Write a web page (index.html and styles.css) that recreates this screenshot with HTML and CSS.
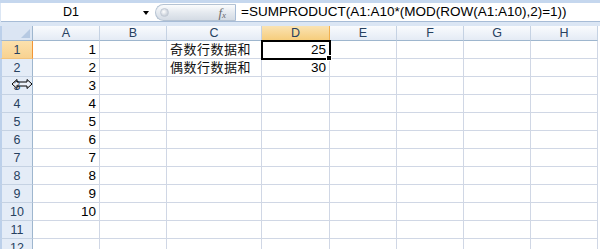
FILE: index.html
```html
<!DOCTYPE html>
<html>
<head>
<meta charset="utf-8" />
<title>SUMPRODUCT</title>
<link rel="stylesheet" href="styles.css">
</head>
<body>
  <section class="sheet">
    <div class="formula-bar">
      <div class="name-box">D1<span class="drop"></span></div>
      <div class="fx-pill"><span class="dot"></span><span class="fx">f<sub>x</sub></span></div>
      <div class="formula">=SUMPRODUCT(A1:A10*(MOD(ROW(A1:A10),2)=1))</div>
    </div>
    <div class="grid">
      <div class="corner"></div>
      <div class="col-hd">A</div>
      <div class="col-hd">B</div>
      <div class="col-hd">C</div>
      <div class="col-hd active">D</div>
      <div class="col-hd">E</div>
      <div class="col-hd">F</div>
      <div class="col-hd">G</div>
      <div class="col-hd">H</div>

      <div class="row-hd active">1</div>
      <div class="cell num">1</div><div class="cell"></div><div class="cell text">奇数行数据和</div><div class="cell num selected">25</div><div class="cell"></div><div class="cell"></div><div class="cell"></div><div class="cell"></div>

      <div class="row-hd">2</div>
      <div class="cell num">2</div><div class="cell"></div><div class="cell text">偶数行数据和</div><div class="cell num">30</div><div class="cell"></div><div class="cell"></div><div class="cell"></div><div class="cell"></div>

      <div class="row-hd">3
        <svg class="resize-cursor" width="22" height="12" viewBox="0 0 22 12">
          <path d="M1 6 L6 1.5 L6 4 L16 4 L16 1.5 L21 6 L16 10.5 L16 8 L6 8 L6 10.5 Z" fill="rgba(255,255,255,0.35)" stroke="#000" stroke-width="1" stroke-linejoin="round"/>
        </svg>
      </div>
      <div class="cell num">3</div><div class="cell"></div><div class="cell"></div><div class="cell"></div><div class="cell"></div><div class="cell"></div><div class="cell"></div><div class="cell"></div>

      <div class="row-hd">4</div>
      <div class="cell num">4</div><div class="cell"></div><div class="cell"></div><div class="cell"></div><div class="cell"></div><div class="cell"></div><div class="cell"></div><div class="cell"></div>

      <div class="row-hd">5</div>
      <div class="cell num">5</div><div class="cell"></div><div class="cell"></div><div class="cell"></div><div class="cell"></div><div class="cell"></div><div class="cell"></div><div class="cell"></div>

      <div class="row-hd">6</div>
      <div class="cell num">6</div><div class="cell"></div><div class="cell"></div><div class="cell"></div><div class="cell"></div><div class="cell"></div><div class="cell"></div><div class="cell"></div>

      <div class="row-hd">7</div>
      <div class="cell num">7</div><div class="cell"></div><div class="cell"></div><div class="cell"></div><div class="cell"></div><div class="cell"></div><div class="cell"></div><div class="cell"></div>

      <div class="row-hd">8</div>
      <div class="cell num">8</div><div class="cell"></div><div class="cell"></div><div class="cell"></div><div class="cell"></div><div class="cell"></div><div class="cell"></div><div class="cell"></div>

      <div class="row-hd">9</div>
      <div class="cell num">9</div><div class="cell"></div><div class="cell"></div><div class="cell"></div><div class="cell"></div><div class="cell"></div><div class="cell"></div><div class="cell"></div>

      <div class="row-hd">10</div>
      <div class="cell num">10</div><div class="cell"></div><div class="cell"></div><div class="cell"></div><div class="cell"></div><div class="cell"></div><div class="cell"></div><div class="cell"></div>

      <div class="row-hd">11</div>
      <div class="cell"></div><div class="cell"></div><div class="cell"></div><div class="cell"></div><div class="cell"></div><div class="cell"></div><div class="cell"></div><div class="cell"></div>

      <div class="row-hd">12</div>
      <div class="cell"></div><div class="cell"></div><div class="cell"></div><div class="cell"></div><div class="cell"></div><div class="cell"></div><div class="cell"></div><div class="cell"></div>
    </div>
  </section>
</body>
</html>
```

FILE: styles.css
```css
html, body {
  width: 100%;
  height: 100%;
}
body {
  margin: 0;
  overflow: hidden;
  background: #dbe6f4;
  font-family: "Liberation Sans", Arial, "Noto Sans CJK SC", sans-serif;
  color: #000;
}
.sheet {
  width: 600px;
  height: 249px;
  overflow: hidden;
  border-top: 3px solid #c5d7ee;
  box-sizing: border-box;
}
.formula-bar {
  display: flex;
  height: 19px;
  margin-left: 1px;
  background: #fff;
  border-bottom: 1px solid #a7bcd6;
  box-sizing: border-box;
}
.name-box {
  position: relative;
  width: 154px;
  padding-right: 14px;
  box-sizing: border-box;
  text-align: center;
  font-size: 12.5px;
  line-height: 18px;
}
.name-box .drop {
  position: absolute;
  left: 142px;
  top: 8px;
  border-left: 3.5px solid transparent;
  border-right: 3.5px solid transparent;
  border-top: 4px solid #000;
}
.fx-pill {
  position: relative;
  width: 81px;
  height: 17px;
  margin-top: 1px;
  border-radius: 9px 0 0 9px;
  background: linear-gradient(#fbfcfd, #e3e8ee 55%, #d4dbe4);
  border: 1px solid #b5c3d3;
  border-right: 1px solid #a7bcd6;
  box-sizing: border-box;
}
.fx-pill .dot {
  position: absolute;
  left: 4px;
  top: 3px;
  width: 9px;
  height: 9px;
  border-radius: 50%;
  background: radial-gradient(circle at 40% 40%, #fff, #c7ced8 70%);
  border: 1px solid #c2cad5;
  box-sizing: border-box;
}
.fx-pill .fx {
  position: absolute;
  right: 9px;
  top: 0;
  font-family: "Liberation Serif", "Times New Roman", serif;
  font-style: italic;
  font-size: 13px;
  line-height: 15px;
  color: #6b6b6b;
}
.fx-pill .fx sub {
  font-size: 9px;
  vertical-align: -1px;
}
.formula {
  flex: 1;
  padding-left: 5px;
  font-size: 13.5px;
  line-height: 18px;
  white-space: nowrap;
}
.grid {
  display: grid;
  grid-template-columns: 33px 67px 67px 95px 68px 67px 67px 67px 67px;
  grid-template-rows: 15px;
  grid-auto-rows: 18px;
  margin-top: 4px;
  background: #fff;
}
.corner {
  position: relative;
  background: #dbe5f3;
  border-left: 2px solid #bcd0ea;
  border-right: 1px solid #9eb6ce;
  border-bottom: 1px solid #9eb6ce;
  box-sizing: border-box;
}
.corner::after {
  content: "";
  position: absolute;
  right: 2px;
  bottom: 2px;
  border-left: 9px solid transparent;
  border-bottom: 9px solid #b6c9e2;
}
.col-hd {
  background: linear-gradient(#f9fbfd, #e4ebf5);
  border-right: 1px solid #c5d2e3;
  border-bottom: 1px solid #9eb6ce;
  box-sizing: border-box;
  text-align: center;
  font-size: 12.5px;
  line-height: 14px;
  color: #27415f;
}
.col-hd.active {
  background: linear-gradient(#fae3b3, #f6cd7c);
  border-right-color: #f2b04f;
  border-bottom: 1px solid #f29536;
}
.row-hd {
  position: relative;
  background: #e4ecf7;
  border-left: 2px solid #bcd0ea;
  border-right: 1px solid #9eb6ce;
  border-bottom: 1px solid #c5d2e3;
  box-sizing: border-box;
  text-align: center;
  font-size: 12.5px;
  line-height: 18px;
  color: #27415f;
}
.row-hd.active {
  background: linear-gradient(#fbe1ad, #f8d290);
  border-right: 1px solid #f29536;
  border-bottom-color: #f2c37c;
}
.resize-cursor {
  position: absolute;
  left: 9px;
  top: 1px;
}
.cell {
  border-right: 1px solid #d0d7e5;
  border-bottom: 1px solid #d0d7e5;
  box-sizing: border-box;
  font-size: 13.5px;
  line-height: 17px;
  white-space: nowrap;
  overflow: visible;
}
.cell.num {
  text-align: right;
  padding-right: 3px;
}
.cell.text {
  padding-left: 3px;
  font-family: "Noto Sans CJK SC", sans-serif;
  font-size: 13px;
  letter-spacing: 0.5px;
  line-height: 16px;
  color: #111;
}
.cell.selected {
  position: relative;
  outline: 2px solid #000;
  outline-offset: -1px;
  z-index: 1;
}
.cell.selected::after {
  content: "";
  position: absolute;
  right: -3px;
  bottom: -3px;
  width: 4px;
  height: 4px;
  background: #000;
  border: 1px solid #fff;
}
```
